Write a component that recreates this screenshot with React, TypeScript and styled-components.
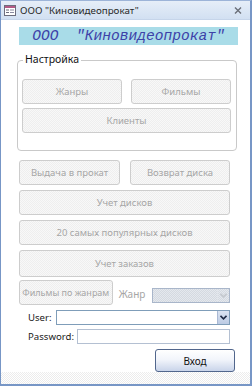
import React from "react";
import styled, { createGlobalStyle } from "styled-components";

const Global = createGlobalStyle`
  html, body { margin: 0; padding: 0; background: #ffffff; }
  body { font-family: "Noto Sans", "Open Sans", sans-serif; }
  * { box-sizing: border-box; }
`;

const Window = styled.div`
  width: 252px;
  height: 386px;
  display: flex;
  flex-direction: column;
  background: #ffffff;
  border-left: 1px solid #7796c6;
  border-right: 2px solid #7796c6;
  border-bottom: 2px solid #7796c6;
  border-top: 1px solid #9db4d8;
  overflow: hidden;
`;

const TitleBar = styled.div`
  height: 19px;
  flex: none;
  display: flex;
  align-items: center;
  padding: 0 8px 0 3px;
  background: linear-gradient(#e6eef8, #d2e0f2);
  border-bottom: 1px solid #c6d5ea;
`;

const TitleText = styled.span`
  flex: 1;
  margin-left: 4px;
  font-size: 9.8px;
  color: #2a2a2a;
  white-space: nowrap;
`;

const Body = styled.div`
  flex: 1;
  display: flex;
  flex-direction: column;
  padding: 0 20px 0 18px;
`;

const Banner = styled.div`
  margin-top: 7px;
  width: 219px;
  height: 18px;
  background: #a9dce8;
  display: flex;
  align-items: center;
  justify-content: center;
  font-family: "Liberation Mono", "DejaVu Sans Mono", monospace;
  font-style: italic;
  font-size: 14.6px;
  color: #3d42a8;
  white-space: pre;
`;

const Group = styled.div`
  position: relative;
  margin: 15px 0 0 -2px;
  width: 220px;
  border: 1px solid #c9c9c9;
  border-radius: 4px;
  padding: 18px 5px 17px 4px;
  display: grid;
  grid-template-columns: 1fr 1fr;
  column-gap: 9px;
  row-gap: 4px;
`;

const Legend = styled.span`
  position: absolute;
  top: -9px;
  left: 5px;
  padding: 0 2px;
  background: #ffffff;
  font-size: 10.5px;
  line-height: 15px;
  color: #111;
`;

const Grid = styled.div`
  margin-top: 9px;
  display: grid;
  grid-template-columns: 101px 100px;
  column-gap: 10px;
  row-gap: 5px;
`;

const DisabledButton = styled.div<{ $span?: boolean; $h?: number }>`
  grid-column: ${(p) => (p.$span ? "1 / -1" : "auto")};
  height: ${(p) => p.$h ?? 25}px;
  display: flex;
  align-items: center;
  justify-content: center;
  border: 1px solid #cdcdcd;
  border-radius: 3px;
  background: repeating-conic-gradient(#eeeeee 0 25%, #f8f8f8 0 50%) 0 0 / 2px 2px;
  color: #a6a6a6;
  font-size: 9.5px;
  white-space: nowrap;
`;

const GenreRow = styled.div`
  margin-top: 3px;
  display: flex;
  align-items: flex-start;
`;

const GenreButton = styled(DisabledButton)`
  width: 95px;
  font-size: 9px;
`;

const GenreLabel = styled.span`
  margin: 7px 0 0 6px;
  width: 34px;
  font-size: 10px;
  color: #a6a6a6;
`;

const Combo = styled.div<{ $disabled?: boolean }>`
  height: 15px;
  display: flex;
  justify-content: flex-end;
  border: 1px solid ${(p) => (p.$disabled ? "#a9b6ca" : "#7f9db9")};
  background: ${(p) =>
    p.$disabled
      ? "repeating-conic-gradient(#d4d9e0 0 25%, #e4e8ee 0 50%) 0 0 / 2px 2px"
      : "#ffffff"};
`;

const GenreCombo = styled(Combo)`
  margin-top: 8px;
  width: 79px;
`;

const DropButton = styled.div<{ $disabled?: boolean }>`
  width: 12px;
  height: 100%;
  display: flex;
  align-items: center;
  justify-content: center;
  background: ${(p) => (p.$disabled ? "transparent" : "linear-gradient(#dbe3f1, #bccbe4)")};
  border-left: 1px solid ${(p) => (p.$disabled ? "#e0e4ea" : "#aab9d4")};
`;

const FieldRow = styled.div<{ $top: number }>`
  margin-top: ${(p) => p.$top}px;
  display: flex;
  align-items: center;
  padding-left: 9px;
`;

const FieldLabel = styled.span<{ $w: number }>`
  width: ${(p) => p.$w}px;
  font-size: 9.6px;
  color: #1a1a1a;
`;

const UserCombo = styled(Combo)`
  width: 177px;
  height: 15px;
`;

const PasswordInput = styled.div`
  width: 155px;
  height: 15px;
  border: 1px solid #b4c0d2;
  background: #ffffff;
`;

const LoginButton = styled.div`
  margin: 5px 0 0 136px;
  width: 80px;
  height: 23px;
  display: flex;
  align-items: center;
  justify-content: center;
  border: 1px solid #51668c;
  border-radius: 3px;
  background: linear-gradient(#ffffff 0%, #f2f5fb 45%, #c9d4ea 100%);
  font-size: 10px;
  color: #111;
`;

const Footer = styled.div`
  margin-top: auto;
  height: 12px;
  flex: none;
  background: repeating-conic-gradient(#ececec 0 25%, #ffffff 0 50%) 0 0 / 2px 2px;
`;

const Chevron = ({ color }: { color: string }) => (
  <svg width="7" height="5" viewBox="0 0 7 5">
    <path d="M0.5 0.8 L3.5 3.8 L6.5 0.8" fill="none" stroke={color} strokeWidth="1.6" />
  </svg>
);

const FormIcon = () => (
  <svg width="12" height="11" viewBox="0 0 12 11">
    <rect x="0.5" y="0.5" width="11" height="10" fill="#ffffff" stroke="#6d6d7d" />
    <rect x="1" y="1" width="10" height="2" fill="#b35a86" />
    <rect x="2" y="4.5" width="3" height="1" fill="#6d6d7d" />
    <rect x="6" y="4.5" width="4" height="1" fill="#8a8aa0" />
    <rect x="2" y="7" width="3" height="1" fill="#6d6d7d" />
    <rect x="6" y="7" width="4" height="1" fill="#8a8aa0" />
  </svg>
);

const CloseIcon = () => (
  <svg width="8" height="7" viewBox="0 0 8 7">
    <path d="M1 0.5 L7 6.5 M7 0.5 L1 6.5" stroke="#6a6f78" strokeWidth="1.4" />
  </svg>
);

export default function App() {
  return (
    <>
      <Global />
      <Window>
        <TitleBar>
          <FormIcon />
          <TitleText>ООО "Киновидеопрокат"</TitleText>
          <CloseIcon />
        </TitleBar>
        <Body>
          <Banner>{'ООО  "Киновидеопрокат"'}</Banner>
          <Group>
            <Legend>Настройка</Legend>
            <DisabledButton>Жанры</DisabledButton>
            <DisabledButton>Фильмы</DisabledButton>
            <DisabledButton $span>Клиенты</DisabledButton>
          </Group>
          <Grid>
            <DisabledButton>Выдача в прокат</DisabledButton>
            <DisabledButton>Возврат диска</DisabledButton>
            <DisabledButton $span>Учет дисков</DisabledButton>
            <DisabledButton $span>20 самых популярных дисков</DisabledButton>
            <DisabledButton $span $h={27}>Учет заказов</DisabledButton>
          </Grid>
          <GenreRow>
            <GenreButton>Фильмы по жанрам</GenreButton>
            <GenreLabel>Жанр</GenreLabel>
            <GenreCombo $disabled>
              <DropButton $disabled>
                <Chevron color="#c4c8ce" />
              </DropButton>
            </GenreCombo>
          </GenreRow>
          <FieldRow $top={5}>
            <FieldLabel $w={28}>User:</FieldLabel>
            <UserCombo>
              <DropButton>
                <Chevron color="#1f2a44" />
              </DropButton>
            </UserCombo>
          </FieldRow>
          <FieldRow $top={4}>
            <FieldLabel $w={50}>Password:</FieldLabel>
            <PasswordInput />
          </FieldRow>
          <LoginButton>Вход</LoginButton>
        </Body>
        <Footer />
      </Window>
    </>
  );
}
